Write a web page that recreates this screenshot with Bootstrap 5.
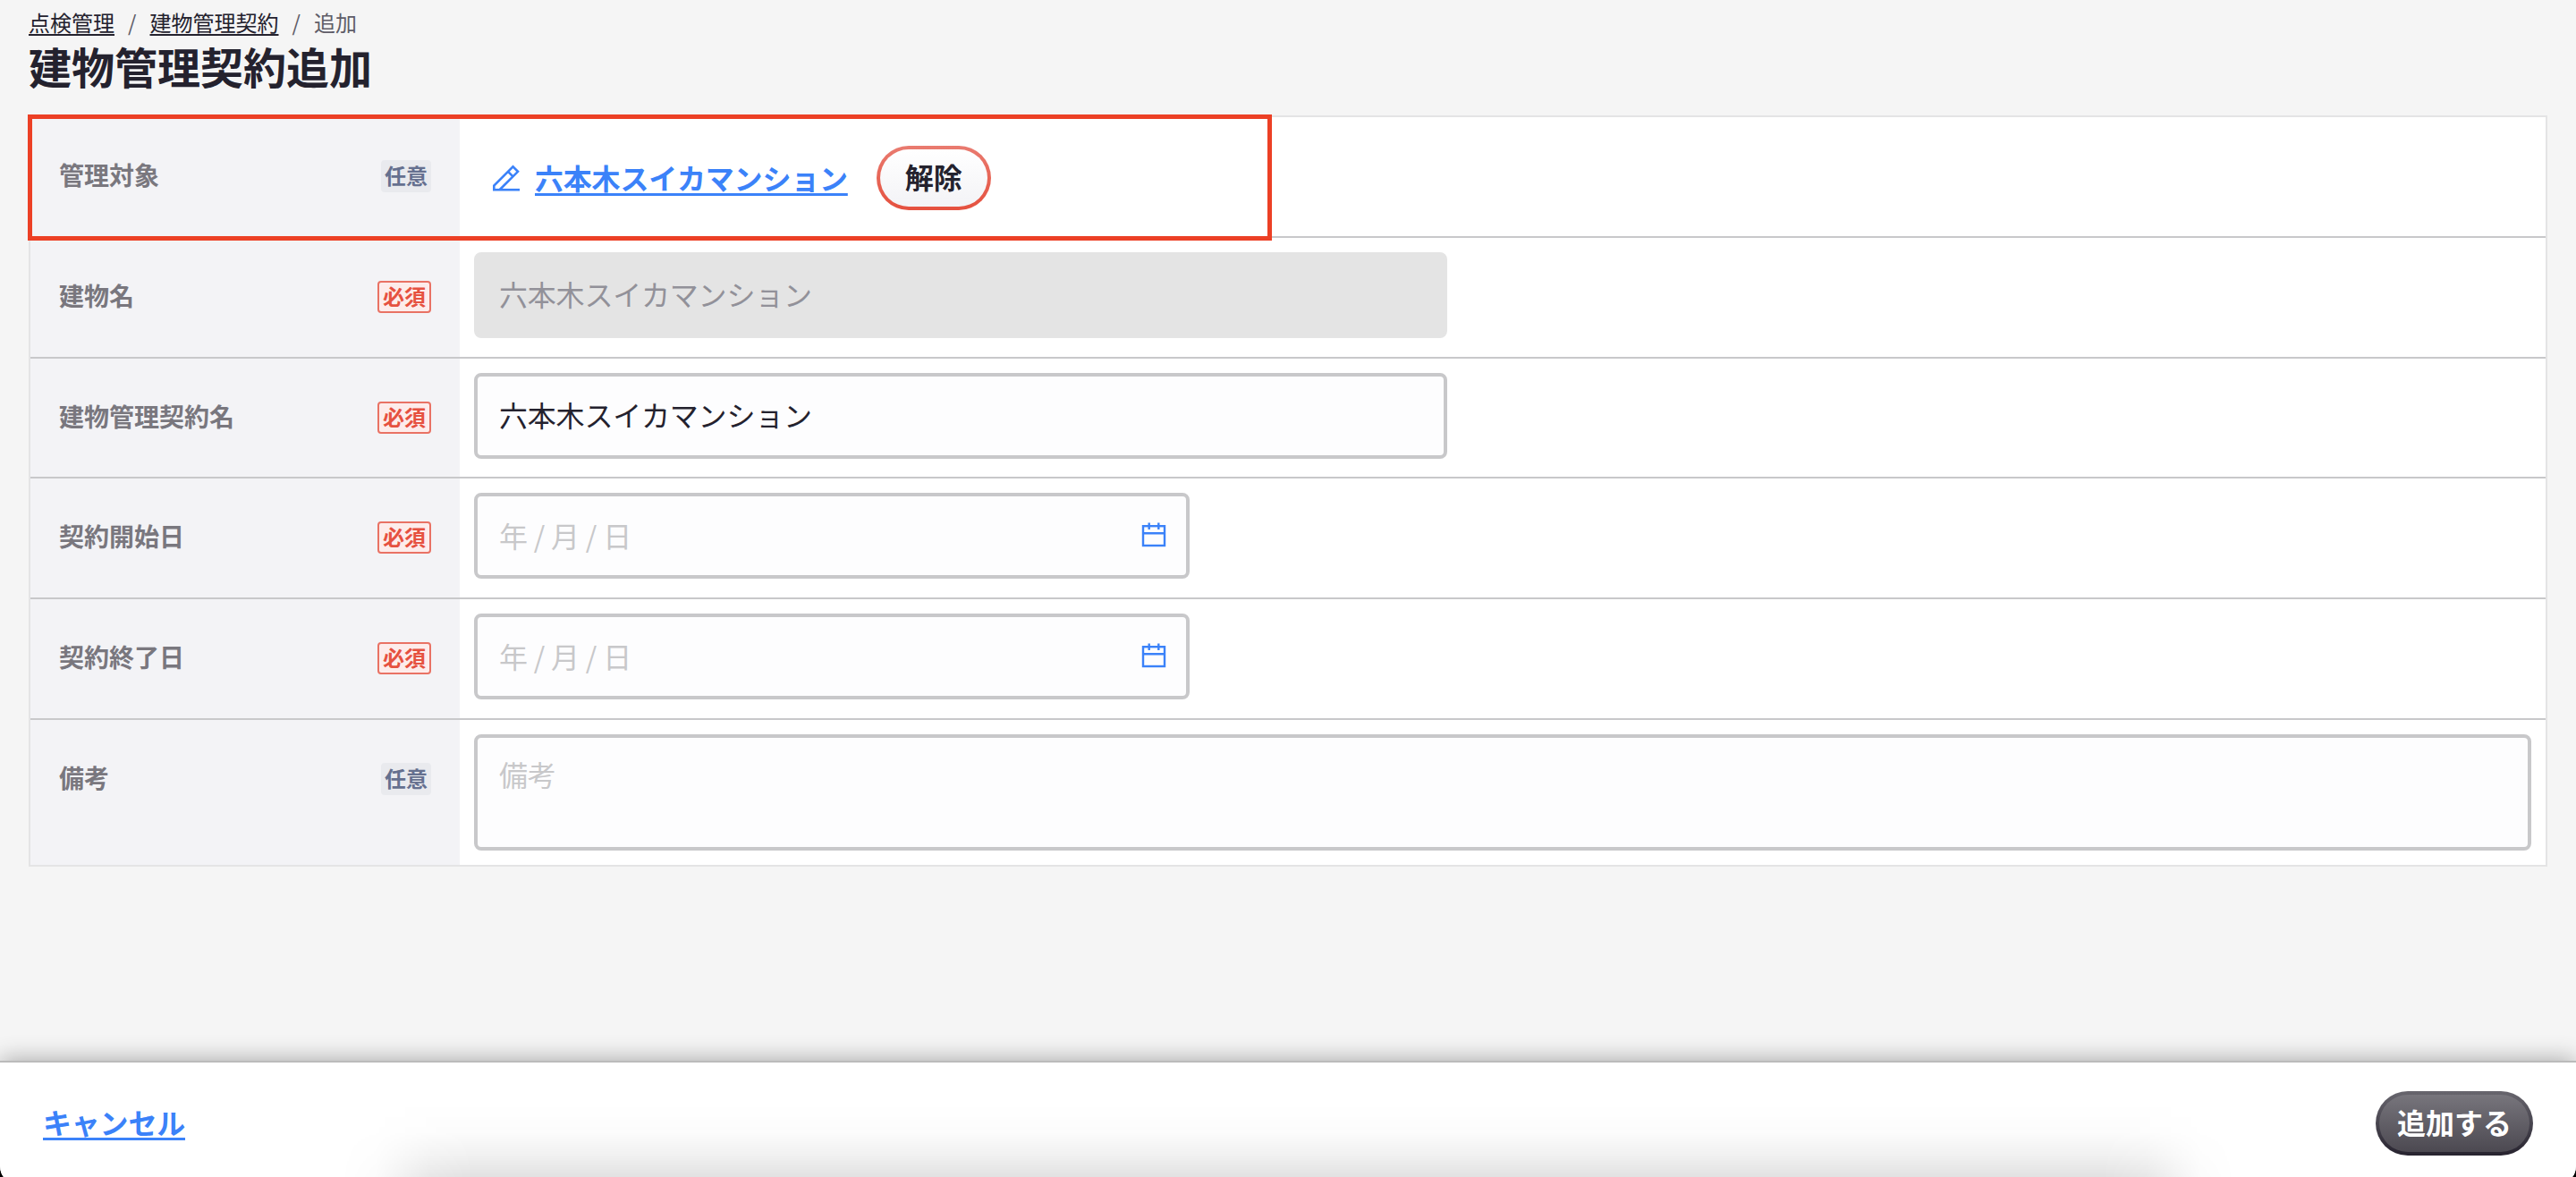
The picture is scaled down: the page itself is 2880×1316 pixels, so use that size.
<!DOCTYPE html>
<html lang="ja">
<head>
<meta charset="utf-8">
<title>建物管理契約追加</title>
<link href="https://cdn.jsdelivr.net/npm/bootstrap@5.3.0/dist/css/bootstrap.min.css" rel="stylesheet">
<style>
html{overflow:hidden}
body{background:#000;color:#24222e;font-family:"Noto Sans CJK JP",sans-serif;font-size:32px;line-height:48px;height:1316px;overflow:hidden}
.page-shell{height:1324px;background:#f5f5f5;border-radius:0 0 20px 20px;overflow:hidden}
.page-head{padding:7px 32px 0}
.crumbs{font-size:24px;line-height:36px;height:36px;color:#5f5d68}
.crumbs a{color:#24222e;text-decoration-thickness:2px;text-underline-offset:3px}
.crumbs .sep{width:39.500px;text-align:center}
.page-title{font-size:48px;line-height:60px;height:86px;font-weight:700;margin:0}
.form-sheet{margin:0 32px;border:2px solid #e4e4e5;background:#fff;height:840px}
.form-line{height:135px;border-bottom:2px solid #c8c8ca}
.form-line.short{height:134px}
.form-line:last-child{height:162px;border-bottom:0}
.head-cell{width:480px;background:#f3f3f6;padding:48px 32px 0}
.head-cell label{font-size:28px;line-height:32px;font-weight:700;color:#79777e}
.tag{height:36px;font-size:24px;line-height:33px;font-weight:700;border-radius:4px}
.tag-opt{background:#e9eaee;color:#65708f;padding:0 4px}
.tag-req{background:#fdeceb;color:#e65140;border:2px solid #e97264;line-height:29px;padding:0 4px}
.body-cell{padding:16px}
.field.form-control{height:96px;width:1088px;border:4px solid #c8c8ca;border-radius:8px;background:#fdfdfe;padding:0 24px 4px;font-size:32px;line-height:48px;letter-spacing:-.2px;color:#24222e;box-shadow:none}
.field.form-control::placeholder{color:#c8c8ca;opacity:1}
.field.form-control:disabled{background:#e4e4e4;border-color:#e4e4e4;color:#929199}
.field.form-control.memo{height:130px;width:100%;padding-top:16px;resize:none}
.date-box{width:800px;height:96px;border:4px solid #c8c8ca;border-radius:8px;background:#fdfdfe;padding:0 22px 3px 24px;color:#c8c8ca;letter-spacing:-.2px}
.blue-link{color:#3b82f9;font-weight:700;text-decoration-thickness:3px;text-underline-offset:4px;letter-spacing:-.2px}
.target{padding:32px 0 0 36px}
.target-name{height:72px}
.target-name .blue-link{margin-bottom:3px}
.pill{height:72px;border-radius:36px;font-size:32px;line-height:60px;font-weight:700;padding:0 0 4px;border:4px solid transparent}
.pill-release{width:128px;margin-left:32px;color:#24222e;background:linear-gradient(#fff,#f3f3f6) padding-box,linear-gradient(#e97b70,#e5503e) border-box}
.pill-submit{width:176px;color:#fff;background:linear-gradient(#77757c,#4c4951) padding-box,linear-gradient(#68666e,#27232f) border-box}
.pill-submit:hover{color:#fff}
.marker{left:31px;top:128px;width:1391px;height:141px;border:5px solid #ec4025}
.action-bar{height:138px;border-top:2px solid #bbb;background:#fff;padding:0 48px;box-shadow:0 -2px 24px rgba(0,0,0,.3)}
.action-bar .blue-link{margin-bottom:4px}
.floor-shade{left:380px;right:380px;bottom:8px;height:84px;background:linear-gradient(rgba(0,0,0,0),rgba(0,0,0,.013) 40%,rgba(0,0,0,.055) 70%,rgba(0,0,0,.115));-webkit-mask-image:linear-gradient(90deg,transparent,rgba(0,0,0,.12) 40px,rgba(0,0,0,.8) 100px,#000 150px,#000 calc(100% - 150px),rgba(0,0,0,.8) calc(100% - 100px),rgba(0,0,0,.12) calc(100% - 40px),transparent);mask-image:linear-gradient(90deg,transparent,rgba(0,0,0,.12) 40px,rgba(0,0,0,.8) 100px,#000 150px,#000 calc(100% - 150px),rgba(0,0,0,.8) calc(100% - 100px),rgba(0,0,0,.12) calc(100% - 40px),transparent)}
</style>
</head>
<body>
<div class="page-shell d-flex flex-column position-relative">
  <header class="page-head">
    <nav class="crumbs d-flex"><a href="#">点検管理</a><span class="sep">/</span><a href="#">建物管理契約</a><span class="sep">/</span><span>追加</span></nav>
    <h1 class="page-title">建物管理契約追加</h1>
  </header>
  <main class="form-sheet">
    <div class="form-line d-flex">
      <div class="head-cell d-flex justify-content-between align-items-start"><label>管理対象</label><span class="tag tag-opt">任意</span></div>
      <div class="target d-flex align-items-start flex-grow-1">
        <div class="target-name d-flex align-items-center">
          <svg class="me-3" width="32" height="32" viewBox="0 0 32 32" fill="none" stroke="#3b82f9" stroke-width="2.600"><path d="M2.300 29V24.500L23.500 3.300L29 8.800L8.800 29"/><path d="M18 8.800L23.500 14.300"/><path d="M1 29.200H31"/></svg>
          <a class="blue-link" href="#">六本木スイカマンション</a>
        </div>
        <button class="btn pill pill-release">解除</button>
      </div>
    </div>
    <div class="form-line d-flex">
      <div class="head-cell d-flex justify-content-between align-items-start"><label>建物名</label><span class="tag tag-req">必須</span></div>
      <div class="body-cell flex-grow-1"><input class="form-control field" value="六本木スイカマンション" disabled></div>
    </div>
    <div class="form-line short d-flex">
      <div class="head-cell d-flex justify-content-between align-items-start"><label>建物管理契約名</label><span class="tag tag-req">必須</span></div>
      <div class="body-cell flex-grow-1"><input class="form-control field" value="六本木スイカマンション"></div>
    </div>
    <div class="form-line d-flex">
      <div class="head-cell d-flex justify-content-between align-items-start"><label>契約開始日</label><span class="tag tag-req">必須</span></div>
      <div class="body-cell flex-grow-1"><div class="date-box d-flex align-items-center justify-content-between"><span>年 / 月 / 日</span>
        <svg width="28" height="28" viewBox="0 0 28 28" fill="none" stroke="#3b82f9" stroke-width="2.400"><rect x="2" y="4.200" width="24" height="21.800"/><path d="M2 12.300H26M8.700 .5V8M19.300 .5V8"/></svg></div></div>
    </div>
    <div class="form-line d-flex">
      <div class="head-cell d-flex justify-content-between align-items-start"><label>契約終了日</label><span class="tag tag-req">必須</span></div>
      <div class="body-cell flex-grow-1"><div class="date-box d-flex align-items-center justify-content-between"><span>年 / 月 / 日</span>
        <svg width="28" height="28" viewBox="0 0 28 28" fill="none" stroke="#3b82f9" stroke-width="2.400"><rect x="2" y="4.200" width="24" height="21.800"/><path d="M2 12.300H26M8.700 .5V8M19.300 .5V8"/></svg></div></div>
    </div>
    <div class="form-line d-flex">
      <div class="head-cell d-flex justify-content-between align-items-start"><label>備考</label><span class="tag tag-opt">任意</span></div>
      <div class="body-cell flex-grow-1"><textarea class="form-control field memo" placeholder="備考"></textarea></div>
    </div>
  </main>
  <div class="marker position-absolute"></div>
  <footer class="action-bar mt-auto d-flex align-items-center justify-content-between">
    <a class="blue-link" href="#">キャンセル</a>
    <button class="btn pill pill-submit">追加する</button>
  </footer>
  <div class="floor-shade position-absolute"></div>
</div>
<script src="https://cdn.jsdelivr.net/npm/bootstrap@5.3.0/dist/js/bootstrap.bundle.min.js"></script>
</body>
</html>
